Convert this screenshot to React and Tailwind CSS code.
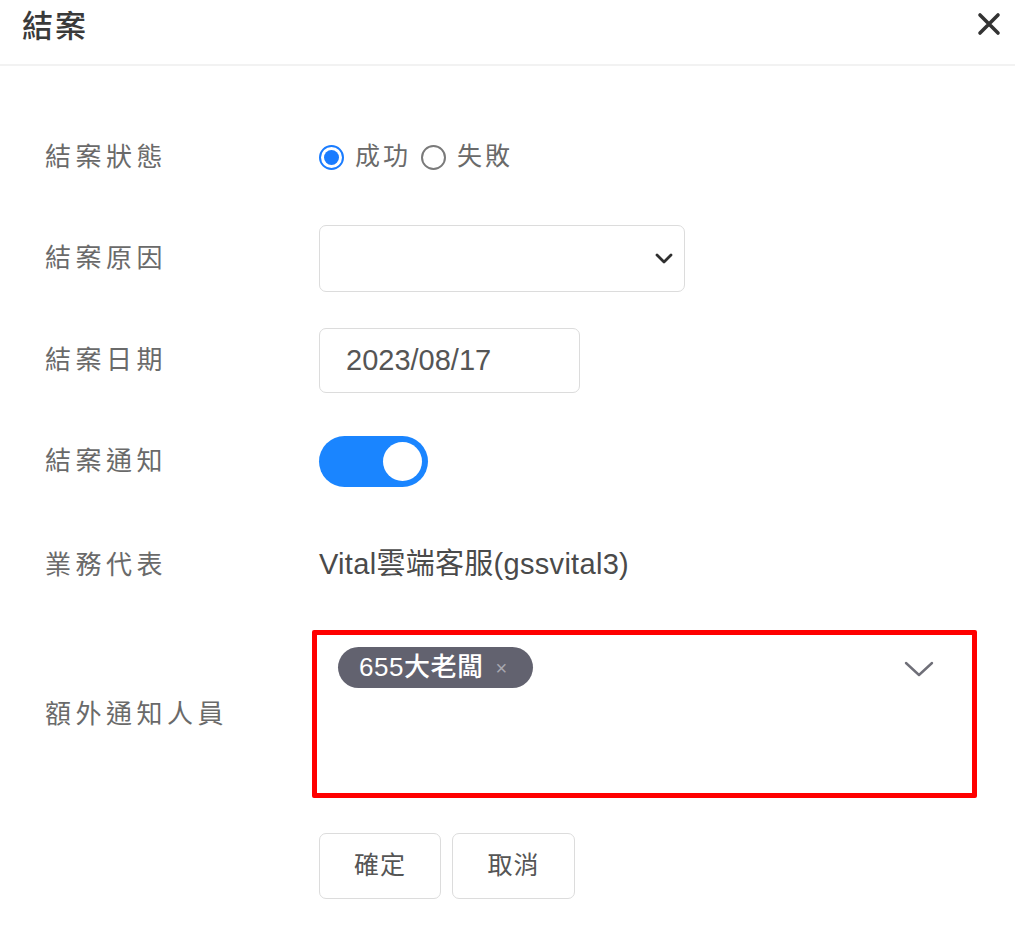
import React from "react";

const FONT = { fontFamily: '"Liberation Sans", "Noto Sans CJK TC", sans-serif' };

const Row = ({ label, className = "", children }) => {
  return (
    <div className={`flex items-center ${className}`}>
      <div className="w-[319px] shrink-0 pl-[45px] text-[26px] tracking-[4.5px] text-[#6a6a6a]">
        {label}
      </div>
      <div className="flex items-center">{children}</div>
    </div>
  );
};

const Radio = ({ checked, label }) => {
  return (
    <label className="flex items-center gap-[11px]">
      {checked ? (
        <span className="flex h-[25px] w-[25px] items-center justify-center rounded-full border-[2px] border-[#1a7cff]">
          <span className="h-[15px] w-[15px] rounded-full bg-[#1a7cff]" />
        </span>
      ) : (
        <span className="h-[25px] w-[25px] rounded-full border-[2px] border-[#7a7a7a]" />
      )}
      <span className="text-[25px] tracking-[3px] text-[#6a6a6a]">{label}</span>
    </label>
  );
};

export default function App() {
  return (
    <div className="h-[929px] w-[1015px] bg-white" style={FONT}>
      {/* header */}
      <div className="flex h-[66px] items-start justify-between border-b-2 border-[#f2f2f2] pl-[22px] pr-[14px] pt-[4px]">
        <div className="text-[31px] font-medium tracking-[2px] text-[#3a3a3a]">結案</div>
        <svg width="24" height="24" viewBox="0 0 24 24" className="mt-[8px]">
          <path d="M3 3 L21 21 M21 3 L3 21" stroke="#333" strokeWidth="3.6" strokeLinecap="round" />
        </svg>
      </div>

      <div className="flex flex-col pt-[63px]">
        <Row label="結案狀態" className="h-[56px]">
          <div className="flex items-center gap-[10px]">
            <Radio checked label="成功" />
            <Radio label="失敗" />
          </div>
        </Row>

        <Row label="結案原因" className="mt-[40px] h-[67px]">
          <div className="flex h-[67px] w-[366px] items-center justify-end rounded-[7px] border border-[#dcdcdc] pr-[11px]">
            <svg width="18" height="12" viewBox="0 0 18 12">
              <path d="M2 2 L9 9 L16 2" fill="none" stroke="#2f2f2f" strokeWidth="2.8" strokeLinecap="round" strokeLinejoin="round" />
            </svg>
          </div>
        </Row>

        <Row label="結案日期" className="mt-[36px] h-[65px]">
          <div className="flex h-[65px] w-[261px] items-center rounded-[7px] border border-[#dcdcdc] pl-[26px] text-[29px] text-[#555]">
            2023/08/17
          </div>
        </Row>

        <Row label="結案通知" className="mt-[43px] h-[51px]">
          <div className="flex h-[51px] w-[109px] items-center justify-end rounded-full bg-[#1a85ff] pr-[6px]">
            <span className="h-[39px] w-[39px] rounded-full bg-white" />
          </div>
        </Row>

        <Row label="業務代表" className="mt-[50px] h-[56px]">
          <div className="text-[29px] tracking-[0.3px] text-[#4a4a4a]">Vital雲端客服(gssvital3)</div>
        </Row>

        <Row label="額外通知人員" className="mt-[37px] h-[168px]">
          <div className="-ml-[7px] flex h-[168px] w-[665px] items-start justify-between rounded-[2px] border-[5px] border-[#ff0000] pl-[21px] pr-[38px] pt-[12px]">
            <div className="flex h-[41px] items-center gap-[12px] rounded-full bg-[#62626f] pl-[21px] pr-[26px]">
              <span className="text-[26px] font-medium tracking-[0.5px] text-white">655大老闆</span>
              <span className="text-[20px] text-[#a8a8b0]">×</span>
            </div>
            <svg width="30" height="18" viewBox="0 0 30 18" className="mt-[13px]">
              <path d="M2 3 L15 15 L28 3" fill="none" stroke="#6f6f78" strokeWidth="2.4" strokeLinecap="round" strokeLinejoin="round" />
            </svg>
          </div>
        </Row>

        <div className="mt-[35px] flex gap-[11px] pl-[319px]">
          <button className="h-[66px] w-[122px] rounded-[7px] border border-[#dcdcdc] bg-white text-[25px] tracking-[1px] text-[#555]">
            確定
          </button>
          <button className="h-[66px] w-[123px] rounded-[7px] border border-[#dcdcdc] bg-white text-[25px] tracking-[1px] text-[#555]">
            取消
          </button>
        </div>
      </div>
    </div>
  );
}
